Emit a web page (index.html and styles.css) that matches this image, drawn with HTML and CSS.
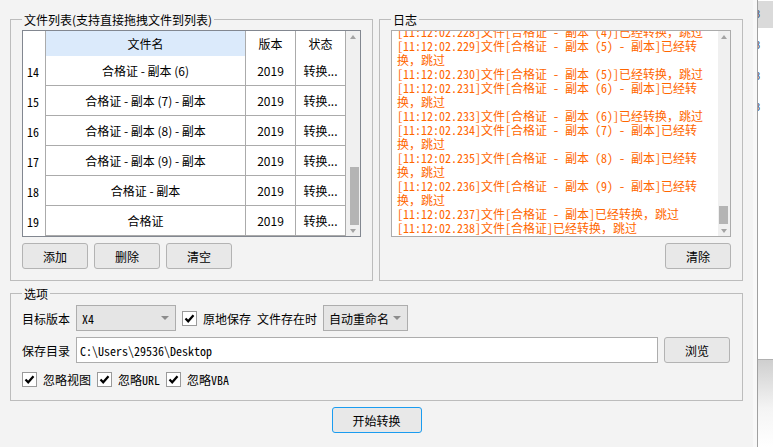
FILE: index.html
```html
<!DOCTYPE html>
<html lang="zh-CN">
<head>
<meta charset="utf-8">
<title>转换工具</title>
<link rel="stylesheet" href="styles.css">
</head>
<body>
<div class="app">
  <div class="top">
    <fieldset class="group group-files">
      <legend>文件列表(支持直接拖拽文件到列表)</legend>
      <div class="grid">
        <div class="grid-body">
          <div class="row head">
            <div class="c rh"></div>
            <div class="c c1 blue">文件名</div>
            <div class="c c2">版本</div>
            <div class="c c3">状态</div>
          </div>
          <div class="row">
            <div class="c rh mono">14</div>
            <div class="c c1">合格证 - 副本 (6)</div>
            <div class="c c2">2019</div>
            <div class="c c3">转换...</div>
          </div>
          <div class="row">
            <div class="c rh mono">15</div>
            <div class="c c1">合格证 - 副本 (7) - 副本</div>
            <div class="c c2">2019</div>
            <div class="c c3">转换...</div>
          </div>
          <div class="row">
            <div class="c rh mono">16</div>
            <div class="c c1">合格证 - 副本 (8) - 副本</div>
            <div class="c c2">2019</div>
            <div class="c c3">转换...</div>
          </div>
          <div class="row">
            <div class="c rh mono">17</div>
            <div class="c c1">合格证 - 副本 (9) - 副本</div>
            <div class="c c2">2019</div>
            <div class="c c3">转换...</div>
          </div>
          <div class="row">
            <div class="c rh mono">18</div>
            <div class="c c1">合格证 - 副本</div>
            <div class="c c2">2019</div>
            <div class="c c3">转换...</div>
          </div>
          <div class="row">
            <div class="c rh mono">19</div>
            <div class="c c1">合格证</div>
            <div class="c c2">2019</div>
            <div class="c c3">转换...</div>
          </div>
        </div>
        <div class="vscroll vs-grid">
          <div class="arr up"></div>
          <div class="track"><div class="thumb"></div></div>
          <div class="arr down"></div>
        </div>
      </div>
      <div class="btnrow">
        <button class="btn">添加</button>
        <button class="btn">删除</button>
        <button class="btn">清空</button>
      </div>
    </fieldset>

    <fieldset class="group group-log">
      <legend>日志</legend>
      <div class="logbox">
        <div class="logview">
          <div class="logtext">
            <div class="ln">[11:12:02.228]文件[合格证 - 副本 (4)]已经转换，跳过</div>
            <div class="ln">[11:12:02.229]文件[合格证 - 副本 (5) - 副本]已经转</div>
            <div class="ln">换，跳过</div>
            <div class="ln">[11:12:02.230]文件[合格证 - 副本 (5)]已经转换，跳过</div>
            <div class="ln">[11:12:02.231]文件[合格证 - 副本 (6) - 副本]已经转</div>
            <div class="ln">换，跳过</div>
            <div class="ln">[11:12:02.233]文件[合格证 - 副本 (6)]已经转换，跳过</div>
            <div class="ln">[11:12:02.234]文件[合格证 - 副本 (7) - 副本]已经转</div>
            <div class="ln">换，跳过</div>
            <div class="ln">[11:12:02.235]文件[合格证 - 副本 (8) - 副本]已经转</div>
            <div class="ln">换，跳过</div>
            <div class="ln">[11:12:02.236]文件[合格证 - 副本 (9) - 副本]已经转</div>
            <div class="ln">换，跳过</div>
            <div class="ln">[11:12:02.237]文件[合格证 - 副本]已经转换，跳过</div>
            <div class="ln">[11:12:02.238]文件[合格证]已经转换，跳过</div>
          </div>
        </div>
        <div class="vscroll vs-log">
          <div class="arr up"></div>
          <div class="track"><div class="thumb"></div></div>
          <div class="arr down"></div>
        </div>
      </div>
      <div class="btnrow right">
        <button class="btn">清除</button>
      </div>
    </fieldset>
  </div>

  <fieldset class="group group-opt">
    <legend>选项</legend>
    <div class="orow r1">
      <span class="lbl">目标版本</span>
      <div class="combo cb-ver"><span class="mono">X4</span><span class="caret"></span></div>
      <span class="chk"><svg viewBox="0 0 13 13" width="13" height="13"><path d="M2.5 6.5 L5.2 9.3 L10.5 3.2" fill="none" stroke="#000" stroke-width="2.2"/></svg></span>
      <span class="lbl">原地保存</span>
      <span class="lbl">文件存在时</span>
      <div class="combo cb-ren"><span>自动重命名</span><span class="caret"></span></div>
    </div>
    <div class="orow r2">
      <span class="lbl">保存目录</span>
      <div class="textbox"><span class="mono">C:\Users\29536\Desktop</span></div>
      <button class="btn">浏览</button>
    </div>
    <div class="orow r3">
      <span class="chk"><svg viewBox="0 0 13 13" width="13" height="13"><path d="M2.5 6.5 L5.2 9.3 L10.5 3.2" fill="none" stroke="#000" stroke-width="2.2"/></svg></span>
      <span class="lbl">忽略视图</span>
      <span class="chk"><svg viewBox="0 0 13 13" width="13" height="13"><path d="M2.5 6.5 L5.2 9.3 L10.5 3.2" fill="none" stroke="#000" stroke-width="2.2"/></svg></span>
      <span class="lbl">忽略<span class="mono">URL</span></span>
      <span class="chk"><svg viewBox="0 0 13 13" width="13" height="13"><path d="M2.5 6.5 L5.2 9.3 L10.5 3.2" fill="none" stroke="#000" stroke-width="2.2"/></svg></span>
      <span class="lbl">忽略<span class="mono">VBA</span></span>
    </div>
  </fieldset>

  <div class="startrow">
    <button class="btn start">开始转换</button>
  </div>
</div>
<div class="edge"></div>
<div class="divider"></div>
<div class="side">
  <div class="item sel">8</div>
  <div class="item">8</div>
  <div class="item">8</div>
  <div class="item">8</div>
  <div class="side-fill"></div>
  <div class="side-bottom"></div>
</div>
</body>
</html>
```

FILE: styles.css
```css
html, body {
  margin: 0;
  padding: 0;
}
body {
  width: 773px;
  height: 447px;
  overflow: hidden;
  display: flex;
  background: #f3f3f3;
  font-family: "Noto Sans CJK SC", "Noto Sans", sans-serif;
  font-size: 12px;
  color: #000;
}
.mono {
  font-family: "Noto Sans Mono CJK SC", "Liberation Mono", monospace;
}
.app {
  width: 753px;
  flex: none;
  box-sizing: border-box;
  padding: 11px 0 0 10px;
}
.edge {
  width: 4px;
  flex: none;
  background: #f8f8f8;
}
.divider {
  width: 1px;
  flex: none;
  background: #a0a0a0;
}
.side {
  flex: 1;
  background: #fff;
  overflow: hidden;
  display: flex;
  flex-direction: column;
  padding-top: 1px;
}
.item {
  height: 27px;
  line-height: 27px;
  margin-bottom: 4px;
  margin-left: -4px;
  padding-left: 0;
  color: #3a4a6a;
  font-family: "Liberation Sans", sans-serif;
  font-size: 11px;
}
.item.sel {
  background: #dadada;
  margin-left: 0;
  text-indent: -4px;
}
.side-fill {
  height: 234px;
}
.side-bottom {
  flex: 1;
  border-top: 1px solid #b0b0b0;
  background: linear-gradient(#cfcfcf, #f4f4f4 55%, #ffffff);
}

.top {
  display: flex;
  gap: 6px;
}
.group {
  margin: 0;
  border: 1px solid #bcbcbc;
  padding: 2px 11px 11px;
  min-width: 0;
  box-sizing: border-box;
}
.group legend {
  padding: 0 2px;
  line-height: 17px;
  font-size: 12px;
}
.group-files {
  width: 363px;
}
.group-log {
  width: 364px;
}

/* data grid */
.grid {
  display: flex;
  height: 207px;
  box-sizing: border-box;
  border: 1px solid #828790;
  background: #fff;
}
.grid-body {
  display: flex;
  flex-direction: column;
}
.row {
  display: grid;
  grid-template-columns: 23px 200px 50px 50px;
  height: 30px;
}
.row.head {
  height: 25px;
}
.c {
  box-sizing: border-box;
  border-right: 1px solid #ababab;
  border-bottom: 1px solid #ababab;
  display: flex;
  align-items: center;
  justify-content: center;
  white-space: nowrap;
}
.head .c {
  border-bottom: none;
}
.c.rh {
  border-bottom: none;
  justify-content: flex-start;
  padding-left: 4px;
  font-size: 12px;
}
.c.blue {
  background: #dbeafb;
}

.vscroll {
  background: #f0f0f0;
  display: flex;
  flex-direction: column;
}
.vs-grid {
  width: 14px;
}
.vs-log {
  width: 12px;
}
.arr {
  height: 11px;
  display: flex;
  justify-content: center;
  align-items: center;
}
.arr.up::before, .arr.down::before {
  content: "";
  border-left: 3.5px solid transparent;
  border-right: 3.5px solid transparent;
}
.arr.up::before {
  border-bottom: 4px solid #a3a3a3;
}
.arr.down::before {
  border-top: 4px solid #a3a3a3;
}
.track {
  flex: 1;
  display: flex;
  flex-direction: column;
  justify-content: flex-end;
}
.vs-grid .track {
  padding: 0 1px 0 4px;
}
.vs-grid .thumb {
  height: 58px;
  background: #b4b4b4;
}
.vs-log .track {
  padding: 0 2px 0 1px;
}
.vs-log .thumb {
  height: 18px;
  margin-bottom: 1px;
  background: #b4b4b4;
}

/* log */
.logbox {
  display: flex;
  height: 207px;
  box-sizing: border-box;
  border: 1px solid #ababab;
  background: #fff;
}
.logview {
  flex: 1;
  overflow: hidden;
}
.logtext {
  margin-top: -6px;
  padding-left: 5px;
  color: #ff6600;
  font-family: "Noto Sans Mono CJK SC", "Liberation Mono", "Noto Sans CJK SC", monospace;
  font-size: 12px;
}
.ln {
  height: 14px;
  line-height: 14px;
  white-space: nowrap;
}

/* buttons */
.btnrow {
  display: flex;
  gap: 6px;
  margin-top: 6px;
}
.btnrow.right {
  justify-content: flex-end;
}
.btn {
  width: 66px;
  height: 26px;
  box-sizing: border-box;
  border: 1px solid #b3b3b3;
  border-radius: 3px;
  background: #e8e8e8;
  font-family: inherit;
  font-size: 12px;
  color: #000;
  padding: 0;
}
.btn.start {
  width: 90px;
  border-color: #1a9cf0;
}
.startrow {
  display: flex;
  justify-content: center;
  width: 733px;
  margin-top: 6px;
}

/* options */
.group-opt {
  width: 733px;
  margin-top: 4px;
  padding: 3px 11px 12px;
}
.orow {
  display: flex;
  align-items: center;
  gap: 6px;
}
.r1, .r2 {
  height: 26px;
}
.r2 {
  margin-top: 6px;
}
.r3 {
  height: 18px;
  margin-top: 7px;
}
.lbl {
  white-space: nowrap;
}
.r3 .lbl {
  margin-right: 0;
}
.combo {
  height: 26px;
  box-sizing: border-box;
  border: 1px solid #adadad;
  background: #e5e5e5;
  display: flex;
  align-items: center;
  justify-content: space-between;
  padding: 0 6px 0 5px;
}
.cb-ver {
  width: 100px;
}
.cb-ren {
  width: 85px;
}
.caret {
  width: 0;
  height: 0;
  border-left: 4px solid transparent;
  border-right: 4px solid transparent;
  border-top: 4px solid #8c8c8c;
}
.chk {
  width: 15px;
  height: 15px;
  box-sizing: border-box;
  border: 1px solid #9a9a9a;
  background: #fff;
  display: flex;
  align-items: center;
  justify-content: center;
  flex: none;
}
.chk svg {
  display: block;
}
.textbox {
  width: 582px;
  height: 26px;
  box-sizing: border-box;
  border: 1px solid #adadad;
  background: #fff;
  display: flex;
  align-items: center;
  padding-left: 3px;
}
```
